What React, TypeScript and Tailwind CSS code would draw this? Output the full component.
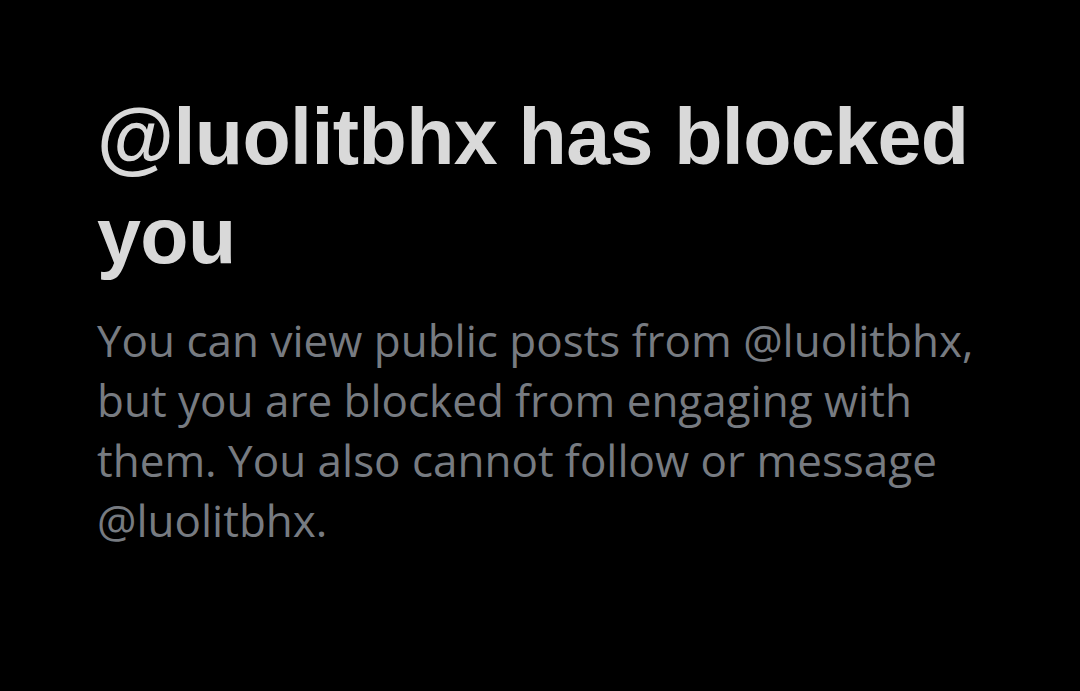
export default function App() {
  return (
    <div className="w-[1080px] h-[691px] bg-black overflow-hidden flex flex-col pl-[97px] pr-[60px] pt-[87px]">
      <h1 className="font-['Liberation_Sans',Arial,sans-serif] text-[79px] leading-[99px] font-bold text-[#d9d9d9] tracking-[-0.6px]">
        @luolitbhx has blocked you
      </h1>
      <p className="mt-[25px] font-['Open_Sans','Noto_Sans',sans-serif] text-[44px] leading-[60px] text-[#777b81]">
        You can view public posts from @luolitbhx, but you are blocked from engaging with them. You also cannot follow or message @luolitbhx.
      </p>
    </div>
  );
}
